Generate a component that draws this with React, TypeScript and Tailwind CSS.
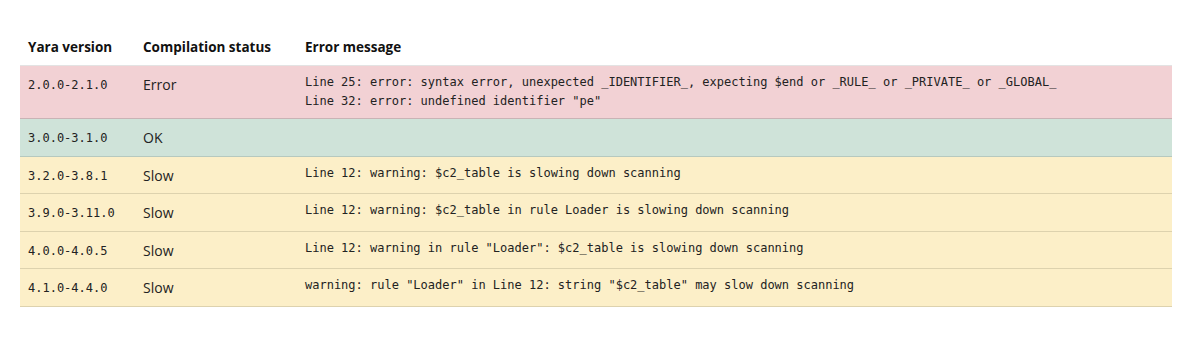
const rows = [
  {
    version: '2.0.0-2.1.0',
    status: 'Error',
    tone: 'error',
    lines: [
      'Line 25: error: syntax error, unexpected _IDENTIFIER_, expecting $end or _RULE_ or _PRIVATE_ or _GLOBAL_',
      'Line 32: error: undefined identifier "pe"',
    ],
  },
  { version: '3.0.0-3.1.0', status: 'OK', tone: 'ok', lines: [] },
  { version: '3.2.0-3.8.1', status: 'Slow', tone: 'slow', lines: ['Line 12: warning: $c2_table is slowing down scanning'] },
  { version: '3.9.0-3.11.0', status: 'Slow', tone: 'slow', lines: ['Line 12: warning: $c2_table in rule Loader is slowing down scanning'] },
  { version: '4.0.0-4.0.5', status: 'Slow', tone: 'slow', lines: ['Line 12: warning in rule "Loader": $c2_table is slowing down scanning'] },
  { version: '4.1.0-4.4.0', status: 'Slow', tone: 'slow', lines: ['warning: rule "Loader" in Line 12: string "$c2_table" may slow down scanning'] },
];

const toneClass: Record<string, string> = {
  error: 'bg-[#f2d1d4] border-[#c9b3b5]',
  ok: 'bg-[#cfe3d9] border-[#b6c9bf]',
  slow: 'bg-[#fcefc8] border-[#ddd2ae]',
};

const mono = "font-['DejaVu_Sans_Mono',monospace] text-[12px] text-[#222]";

export default function App() {
  return (
    <div className="h-[337px] bg-white pt-[29px] font-['Open_Sans',sans-serif]">
      <table className="ml-[20px] w-[1152px] border-collapse text-left">
        <thead>
          <tr className="border-b border-[#e3e3e3]">
            <th className="w-[115px] px-2 pb-[8px] pt-[8px] text-[13.5px] font-bold leading-5 text-[#111]">Yara version</th>
            <th className="w-[162px] px-2 pb-[8px] pt-[8px] text-[13.5px] font-bold leading-5 text-[#111]">Compilation status</th>
            <th className="px-2 pb-[8px] pt-[8px] text-[13.5px] font-bold leading-5 text-[#111]">Error message</th>
          </tr>
        </thead>
        <tbody>
          {rows.map((r) => (
            <tr key={r.version} className={`border-b ${toneClass[r.tone]}`}>
              <td className={`px-2 py-[8.25px] align-top leading-[20px] ${mono}`}>
                <span className="relative top-[1px]">{r.version}</span>
              </td>
              <td className="px-2 py-[8.25px] align-top text-[14px] leading-[20px] text-[#222]">
                <span className="relative top-[1px]">{r.status}</span>
              </td>
              <td className={`px-2 pb-[7px] pt-[7px] align-top leading-[19px] ${mono}`}>
                {r.lines.map((l) => (
                  <div key={l} className="whitespace-pre">{l}</div>
                ))}
              </td>
            </tr>
          ))}
        </tbody>
      </table>
    </div>
  );
}
